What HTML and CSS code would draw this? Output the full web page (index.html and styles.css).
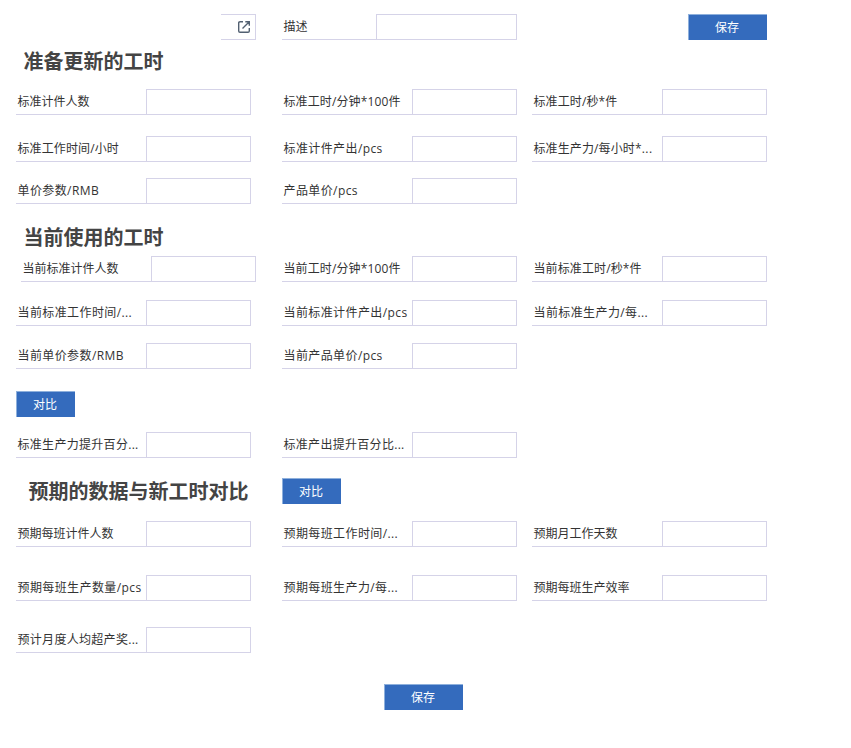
FILE: index.html
```
<!DOCTYPE html>
<html lang="zh-CN">
<head>
<meta charset="utf-8">
<title>标准工时</title>
<link rel="stylesheet" href="styles.css">
</head>
<body>
<main class="form">
  <div class="row">
    <div class="lookup"><svg class="lookup-icon" viewBox="0 0 12 12" aria-hidden="true"><path d="M5 .8H2Q.7.8.7 2v8Q.7 11.3 2 11.3h8q1.3 0 1.3-1.3V7M7.3.8h4v4M11 1 4.5 7.5"/></svg></div>
    <div class="field wide"><span class="label">描述</span><span class="input"></span></div>
    <button class="btn save end">保存</button>
  </div>

  <h2 class="title">准备更新的工时</h2>
  <div class="row">
    <div class="field"><span class="label">标准计件人数</span><span class="input"></span></div>
    <div class="field"><span class="label snug">标准工时/分钟*100件</span><span class="input"></span></div>
    <div class="field"><span class="label snug">标准工时/秒*件</span><span class="input"></span></div>
  </div>
  <div class="row gap-21">
    <div class="field"><span class="label snug">标准工作时间/小时</span><span class="input"></span></div>
    <div class="field"><span class="label loose">标准计件产出/pcs</span><span class="input"></span></div>
    <div class="field"><span class="label snug">标准生产力/每小时*<span class="dots">...</span></span><span class="input"></span></div>
  </div>
  <div class="row gap-16">
    <div class="field"><span class="label loose">单价参数/RMB</span><span class="input"></span></div>
    <div class="field"><span class="label loose">产品单价/pcs</span><span class="input"></span></div>
  </div>

  <h2 class="title current">当前使用的工时</h2>
  <div class="row">
    <div class="field shifted"><span class="label">当前标准计件人数</span><span class="input"></span></div>
    <div class="field"><span class="label snug">当前工时/分钟*100件</span><span class="input"></span></div>
    <div class="field"><span class="label snug">当前标准工时/秒*件</span><span class="input"></span></div>
  </div>
  <div class="row gap-18">
    <div class="field"><span class="label loose">当前标准工作时间/...</span><span class="input"></span></div>
    <div class="field"><span class="label loose">当前标准计件产出/pcs</span><span class="input"></span></div>
    <div class="field"><span class="label loose">当前标准生产力/每...</span><span class="input"></span></div>
  </div>
  <div class="row gap-17">
    <div class="field"><span class="label loose">当前单价参数/RMB</span><span class="input"></span></div>
    <div class="field"><span class="label loose">当前产品单价/pcs</span><span class="input"></span></div>
  </div>

  <div class="row gap-22"><button class="btn">对比</button></div>
  <div class="row gap-15">
    <div class="field"><span class="label even">标准生产力提升百分...</span><span class="input"></span></div>
    <div class="field"><span class="label even">标准产出提升百分比...</span><span class="input"></span></div>
  </div>

  <div class="row gap-20">
    <h2 class="title expected">预期的数据与新工时对比</h2>
    <button class="btn">对比</button>
  </div>
  <div class="row gap-17">
    <div class="field"><span class="label">预期每班计件人数</span><span class="input"></span></div>
    <div class="field"><span class="label loose">预期每班工作时间/...</span><span class="input"></span></div>
    <div class="field"><span class="label">预期月工作天数</span><span class="input"></span></div>
  </div>
  <div class="row gap-28">
    <div class="field"><span class="label loose">预期每班生产数量/pcs</span><span class="input"></span></div>
    <div class="field"><span class="label loose">预期每班生产力/每...</span><span class="input"></span></div>
    <div class="field"><span class="label">预期每班生产效率</span><span class="input"></span></div>
  </div>
  <div class="row gap-26">
    <div class="field"><span class="label even">预计月度人均超产奖...</span><span class="input"></span></div>
  </div>
  <footer class="actions"><button class="btn save">保存</button></footer>
</main>
</body>
</html>
```
FILE: styles.css
```
* { box-sizing: border-box; }
body {
  margin: 0;
  background: #fff;
  color: #333;
  font: 12px/24px "Open Sans", "Noto Sans CJK SC", sans-serif;
}
.form { padding: 14px 0 0 16px; width: 851px; height: 748px; }
.row {
  display: grid;
  grid-template-columns: 266px 250px 235px;
  height: 26px;
}
.gap-15 { margin-top: 15px; }
.gap-16 { margin-top: 16px; }
.gap-17 { margin-top: 17px; }
.gap-18 { margin-top: 18px; }
.gap-20 { margin-top: 20px; }
.gap-21 { margin-top: 21px; }
.gap-22 { margin-top: 22px; }
.gap-26 { margin-top: 26px; }
.gap-28 { margin-top: 28px; }
.field {
  display: grid;
  grid-template-columns: 130px 105px;
  width: 235px;
  height: 26px;
}
.field.wide { grid-template-columns: 94px 141px; }
.field.shifted { margin-left: 5px; }
.label {
  padding: 1px 0 0 1.5px;
  border-bottom: 1px solid #d5d3e8;
  white-space: nowrap;
  overflow: hidden;
}
.label.snug { letter-spacing: .12px; }
.label.even { letter-spacing: .3px; }
.label.loose { letter-spacing: .4px; }
.dots { letter-spacing: .5px; }
.input { border: 1px solid #d5d3e8; background: #fff; }
.lookup {
  display: flex;
  align-items: center;
  justify-content: flex-end;
  width: 35px;
  height: 26px;
  margin-left: 205px;
  padding-right: 5px;
  border: 1px solid #d5d3e8;
  border-left: 0;
}
.lookup-icon {
  width: 12px;
  height: 12px;
  fill: none;
  stroke: #526071;
  stroke-width: 1.4;
}
.title {
  height: 49px;
  margin: 0;
  padding: 6px 0 0 7.5px;
  color: #444;
  font: bold 20px/30px "Noto Sans CJK SC", sans-serif;
  white-space: nowrap;
}
.title.current { height: 52px; padding-top: 18px; }
.title.expected { height: 26px; padding: 0 0 0 12.5px; line-height: 26px; }
.btn {
  width: 59px;
  height: 26px;
  padding: 0 2px 0 0;
  border: solid #8eb0dc;
  border-width: 1px 0 0 1px;
  background: #346bbd;
  color: #fff;
  font: inherit;
}
.btn.save { width: 79px; }
.end { justify-self: end; }
.actions { margin: 31px 0 0 368px; height: 26px; display: flex; }
```
